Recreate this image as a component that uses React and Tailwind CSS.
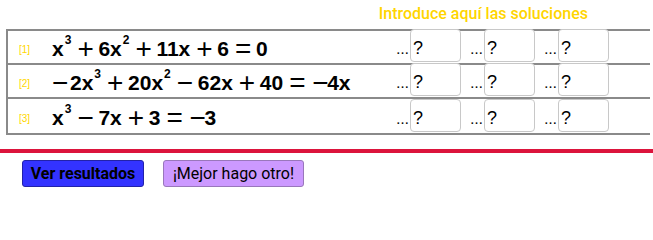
import React from "react";

const eqFont = { fontFamily: '"Liberation Sans", sans-serif' };

function Op({ c }) {
  return <span className="relative top-[2px] inline-block w-[15px] mx-[6px] text-center text-[28px] font-normal leading-none">{c}</span>;
}

function Neg({ wide }) {
  return (
    <span className={"relative top-[2px] inline-block text-center text-[28px] font-normal leading-none " + (wide ? "w-[15px] mr-[3px]" : "w-[15px] ml-[2px]")}>−</span>
  );
}

function Sup({ c }) {
  return <sup className="text-[12px] top-[-12px] ml-[1px]">{c}</sup>;
}

function Answer() {
  return (
    <div className="flex items-end">
      <span className="w-[18px] text-right text-[16px] text-black leading-none pb-[5px] pr-[1px]" style={{ fontFamily: 'Roboto, sans-serif' }}>...</span>
      <div className="w-[51px] h-[33px] border border-[#c8c8c8] rounded-[4px] bg-white flex items-center pl-[2px] pt-[6px] text-[18px] text-black" style={{ fontFamily: '"Liberation Sans", sans-serif' }}>?</div>
    </div>
  );
}

function Row({ label, children, last }) {
  return (
    <div className={"flex items-center h-[34px] " + (last ? "" : "border-b-2 border-[#8a8a8a]")}>
      <div className="w-[44px] pl-[11px] pt-[5px] text-[10px] text-[#ffd700]" style={{ fontFamily: '"Liberation Sans", sans-serif' }}>{label}</div>
      <div className="w-[340px] text-[21px] font-bold text-black whitespace-nowrap pt-[2px] leading-[28px]" style={eqFont}>{children}</div>
      <div className="flex gap-[5px] self-end mb-[1px]">
        <Answer />
        <Answer />
        <Answer />
      </div>
    </div>
  );
}

export default function App() {
  return (
    <div className="w-[653px] h-[200px] bg-white relative overflow-hidden">
      <div className="h-[29px] flex justify-end pr-[65px] pt-[2px]">
        <span className="text-[16px] font-medium text-[#ffd500]" style={{ fontFamily: 'Roboto, sans-serif' }}>Introduce aquí las soluciones</span>
      </div>
      <div className="ml-[6px] mr-[3px] border-t-2 border-b-2 border-l-2 border-[#8a8a8a]">
        <Row label="[1]">
          x<Sup c="3" /><Op c="+" />6x<Sup c="2" /><Op c="+" />11x<Op c="+" />6<Op c="=" />0
        </Row>
        <Row label="[2]">
          <Neg wide />2x<Sup c="3" /><Op c="+" />20x<Sup c="2" /><Op c="−" />62x<Op c="+" />40<Op c="=" /><Neg />4x
        </Row>
        <Row label="[3]" last>
          x<Sup c="3" /><Op c="−" />7x<Op c="+" />3<Op c="=" /><Neg />3
        </Row>
      </div>
      <div className="mt-[14px] h-[4px] bg-[#dc143c]" />
      <div className="flex gap-[19px] pl-[22px] mt-[7px]">
        <button className="w-[122px] h-[27px] bg-[#3333ff] border border-[#2222aa] rounded-[3px] text-[16px] font-bold text-black" style={{ fontFamily: 'Roboto, sans-serif' }}>Ver resultados</button>
        <button className="w-[141px] h-[27px] bg-[#cc99ff] border border-[#9977bb] rounded-[3px] text-[16px] text-black" style={{ fontFamily: 'Roboto, sans-serif' }}>¡Mejor hago otro!</button>
      </div>
    </div>
  );
}
